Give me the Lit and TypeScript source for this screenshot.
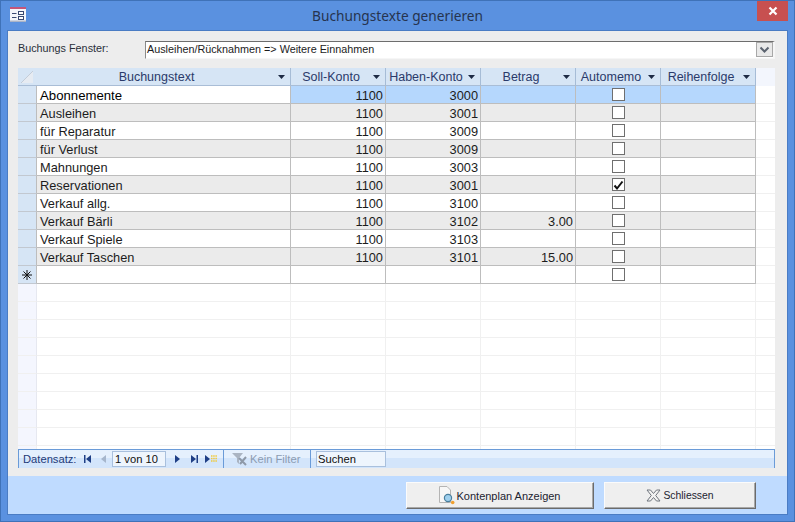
import { LitElement, css, html, nothing } from "lit";
import { customElement } from "lit/decorators.js";

interface Row {
  text: string;
  soll: string;
  haben: string;
  betrag: string;
  memo: boolean;
}

const ROWS: Row[] = [
  { text: "Abonnemente", soll: "1100", haben: "3000", betrag: "", memo: false },
  { text: "Ausleihen", soll: "1100", haben: "3001", betrag: "", memo: false },
  { text: "für Reparatur", soll: "1100", haben: "3009", betrag: "", memo: false },
  { text: "für Verlust", soll: "1100", haben: "3009", betrag: "", memo: false },
  { text: "Mahnungen", soll: "1100", haben: "3003", betrag: "", memo: false },
  { text: "Reservationen", soll: "1100", haben: "3001", betrag: "", memo: true },
  { text: "Verkauf allg.", soll: "1100", haben: "3100", betrag: "", memo: false },
  { text: "Verkauf Bärli", soll: "1100", haben: "3102", betrag: "3.00", memo: false },
  { text: "Verkauf Spiele", soll: "1100", haben: "3103", betrag: "", memo: false },
  { text: "Verkauf Taschen", soll: "1100", haben: "3101", betrag: "15.00", memo: false },
];

const HEADERS = ["Buchungstext", "Soll-Konto", "Haben-Konto", "Betrag", "Automemo", "Reihenfolge"];

@customElement("app-root")
export class AppRoot extends LitElement {
  static styles = css`
    :host {
      display: block;
      font-family: "Liberation Sans", Arial, sans-serif;
      font-size: 12.8px;
      color: #1c1c1c;
    }
    .window {
      width: 795px;
      height: 522px;
      box-sizing: border-box;
      display: flex;
      flex-direction: column;
      padding: 0 7px 7px;
      background: #5a91e0;
      border: 1px solid #3f72b8;
    }
    .titlebar {
      height: 30px;
      flex: none;
      position: relative;
      display: flex;
      align-items: center;
      justify-content: center;
    }
    .title {
      font-family: "Noto Sans", sans-serif;
      font-size: 13.7px;
      color: #26344f;
      margin-top: -1px;
    }
    .appicon {
      position: absolute;
      left: 2px;
      top: 6px;
    }
    .close {
      position: absolute;
      right: -1px;
      top: 0;
      width: 31px;
      height: 20px;
      background: #c75050;
      display: flex;
      align-items: center;
      justify-content: center;
    }
    .client {
      flex: 1;
      display: flex;
      flex-direction: column;
      box-shadow: 0 0 0 1px #4a7cc4;
    }
    .detail {
      height: 445px;
      flex: none;
      box-sizing: border-box;
      padding: 10px 12px 8px 10px;
      background: #ededed;
      display: flex;
      flex-direction: column;
    }
    .pick {
      display: flex;
      align-items: flex-start;
      height: 18px;
      flex: none;
    }
    .pick label {
      width: 127px;
      flex: none;
      color: #2a2f3a;
      font-size: 10.8px;
      line-height: 15px;
    }
    .combo {
      flex: 1;
      height: 18px;
      box-sizing: border-box;
      display: flex;
      align-items: flex-start;
      justify-content: space-between;
      background: #fff;
      border-top: 1px solid #6d6d6d;
      border-left: 1px solid #8a8a8a;
      border-bottom: 1px solid #f6f6f6;
      border-right: 2px solid #f6f6f6;
      padding-left: 1px;
      font-size: 10.8px;
      line-height: 15px;
    }
    .combo-btn {
      width: 17px;
      height: 15px;
      box-sizing: border-box;
      border: 1px solid #a8a8a8;
      background: #e9e9e9;
      display: flex;
      align-items: center;
      justify-content: center;
    }
    .grid {
      margin-top: 9px;
      flex: 1;
      display: flex;
      flex-direction: column;
      background: #fff;
    }
    .row {
      display: grid;
      grid-template-columns: 19px 254px 95px 95px 95px 85px 95px 1fr;
      height: 18px;
      flex: none;
    }
    .row > div {
      box-sizing: border-box;
      border-right: 1px solid #bdbdbd;
      border-bottom: 1px solid #bdbdbd;
      display: flex;
      align-items: center;
      padding: 2px 2px 0;
      min-width: 0;
      white-space: nowrap;
    }
    .row > .sel {
      background: #d6e5f5;
      border-bottom-color: #c2c8d0;
      justify-content: center;
      padding: 0;
    }
    .row > .text {
      padding-left: 3px;
    }
    .row > .num {
      justify-content: flex-end;
    }
    .row > .check {
      justify-content: center;
      padding: 0 0 0 1px;
    }
    .row > .rest {
      background: #fff;
      border-right: none;
      border-bottom: 1px solid #f0f0f0;
    }
    .row.alt > div:not(.sel):not(.rest) {
      background: #ebebeb;
    }
    .row.current > div:not(.sel):not(.rest):not(.text) {
      background: #b5d7fd;
    }
    .row.current > .text {
      color: #000;
      font-size: 13.2px;
    }
    .row.head > div {
      background: #d6e5f5;
      border-right-color: #a6bcd6;
      border-bottom-color: #a9bdd6;
      color: #2a3a6a;
      padding: 0 5px 0 0;
      font-size: 12.5px;
    }
    .row.head > .sel {
      border-right: none;
      padding: 0 2px 0 0;
    }
    .row.head > .rest {
      background: #f3f6fd;
      border-right: none;
      border-bottom: none;
    }
    .row.head .label {
      flex: 1;
      text-align: center;
      padding-right: 2px;
    }
    .row.empty > div {
      background: #fff;
      border-right-color: #f0f0f0;
      border-bottom-color: #f0f0f0;
    }
    .row.empty > .sel {
      background: #f4f6fe;
      border-right-color: #e6e8f0;
    }
    .row.empty > .rest {
      border-right: none;
    }
    .filler {
      flex: 1;
      display: grid;
      grid-template-columns: 19px 254px 95px 95px 95px 85px 95px 1fr;
    }
    .filler > div {
      border-right: 1px solid #f0f0f0;
    }
    .filler > .sel {
      background: #f4f6fe;
    }
    .filler > .rest {
      border-right: none;
    }
    .box {
      width: 13px;
      height: 13px;
      box-sizing: border-box;
      border: 1px solid #6f6f6f;
      background: #fff;
      display: block;
    }
    .nav {
      height: 19px;
      flex: none;
      box-sizing: border-box;
      display: flex;
      align-items: center;
      background: linear-gradient(#e5f0fd 0, #e5f0fd 46%, #d3e5fb 46%, #d3e5fb 100%);
      border: 1px solid #6a9bd8;
      border-bottom: none;
      padding-left: 4px;
      color: #1e3a78;
      font-size: 11.2px;
    }
    .nav .caption {
      width: 61px;
      flex: none;
    }
    .nav svg {
      flex: none;
      display: block;
    }
    .nav .prev {
      margin-left: 10px;
    }
    .nav .last {
      margin-left: 10px;
    }
    .nav .new {
      margin-left: 7px;
    }
    .record {
      width: 54px;
      height: 16px;
      box-sizing: border-box;
      border: 1px solid #a9c0dd;
      background: #eef5fd;
      color: #101010;
      display: flex;
      align-items: center;
      padding-left: 2px;
      flex: none;
      margin: 0 9px 0 5px;
    }
    .sep {
      width: 1px;
      height: 100%;
      background: #6a9bd8;
      flex: none;
    }
    .sep.first {
      margin-left: 5px;
    }
    .nofilter {
      width: 86px;
      box-sizing: border-box;
      padding-left: 8px;
      display: flex;
      align-items: center;
      gap: 2px;
      color: #8c9cb2;
      flex: none;
    }
    .search {
      width: 70px;
      height: 16px;
      box-sizing: border-box;
      margin-left: 5px;
      border: 1px solid #a9c0dd;
      background: #eef5fd;
      color: #101010;
      padding-left: 1px;
      display: flex;
      align-items: center;
      flex: none;
    }
    .footer {
      flex: 1;
      background: #bfdbff;
      display: flex;
      justify-content: flex-end;
      gap: 10px;
      padding: 6px 31px 0 0;
      box-sizing: border-box;
    }
    button {
      height: 27px;
      box-sizing: border-box;
      font: inherit;
      font-size: 11px;
      color: #1c2330;
      background: #efefef;
      border: 1px solid;
      border-color: #fbfbfb #6b6b6b #6b6b6b #fbfbfb;
      box-shadow: inset -1px -1px 0 #a8a8a8;
      display: flex;
      align-items: center;
      justify-content: center;
      padding: 0;
    }
    .b1 {
      width: 188px;
      gap: 1px;
      padding-right: 2px;
    }
    .b2 {
      width: 152px;
      gap: 2px;
      font-size: 10.4px;
    }
  `;

  private gridRow(row: Row, i: number) {
    const cls = ["row", i % 2 ? "alt" : "", i === 0 ? "current" : ""].join(" ");
    return html`<div class=${cls}>
      <div class="sel"></div>
      <div class="text">${row.text}</div>
      <div class="num">${row.soll}</div>
      <div class="num">${row.haben}</div>
      <div class="num">${row.betrag}</div>
      <div class="check">${this.box(row.memo)}</div>
      <div></div>
      <div class="rest"></div>
    </div>`;
  }

  private box(checked: boolean) {
    return html`<span class="box"
      >${checked
        ? html`<svg width="11" height="11" viewBox="0 0 11 11">
            <path d="M1.5 5.5 L4 8.5 L9.5 1.5" fill="none" stroke="#111" stroke-width="2" />
          </svg>`
        : nothing}</span
    >`;
  }

  render() {
    return html`
      <div class="window">
        <div class="titlebar">
          <svg class="appicon" width="16" height="15" viewBox="0 0 16 15">
            <rect x="0" y="0" width="16" height="15" fill="#f4f6fb" />
            <rect x="0" y="0" width="16" height="2" fill="#c4567a" />
            <rect x="0" y="13.5" width="16" height="1.5" fill="#aab4c8" />
            <path d="M2 6.5 H6.5 M2 10.5 H6.5" stroke="#3a4a72" stroke-width="1" />
            <rect x="8.5" y="4.5" width="5" height="3" fill="#fff" stroke="#3a4a72" />
            <rect x="8.5" y="9.5" width="5" height="3" fill="#fff" stroke="#3a4a72" />
          </svg>
          <span class="title">Buchungstexte generieren</span>
          <div class="close">
            <svg width="10" height="10" viewBox="0 0 10 10">
              <path d="M1.5 1.5 L8.5 8.5 M8.5 1.5 L1.5 8.5" stroke="#fff" stroke-width="2.2" />
            </svg>
          </div>
        </div>
        <div class="client">
          <div class="detail">
            <div class="pick">
              <label>Buchungs Fenster:</label>
              <div class="combo">
                <span>Ausleihen/Rücknahmen =&gt; Weitere Einnahmen</span>
                <div class="combo-btn">
                  <svg width="11" height="8" viewBox="0 0 11 8">
                    <path d="M1.5 1.5 L5.5 5.5 L9.5 1.5" fill="none" stroke="#5c6470" stroke-width="2" />
                  </svg>
                </div>
              </div>
            </div>
            <div class="grid">
              <div class="row head">
                <div class="sel">
                  <svg width="12" height="12" viewBox="0 0 12 12">
                    <path d="M12 0 V12 H0 Z" fill="#e6ebf2" />
                    <path d="M12 0 L0 12" stroke="#c3ccd8" />
                  </svg>
                </div>
                ${HEADERS.map(
                  (h) => html`<div>
                    <span class="label">${h}</span>
                    <svg width="7" height="4" viewBox="0 0 7 4"><path d="M0 0 H7 L3.5 4 Z" fill="#1d2a44" /></svg>
                  </div>`
                )}
                <div class="rest"></div>
              </div>
              ${ROWS.map((r, i) => this.gridRow(r, i))}
              <div class="row">
                <div class="sel">
                  <svg width="10" height="10" viewBox="0 0 10 10">
                    <path
                      d="M5 0 V10 M0 5 H10 M1.5 1.5 L8.5 8.5 M8.5 1.5 L1.5 8.5"
                      stroke="#111"
                      stroke-width="1"
                    />
                  </svg>
                </div>
                <div class="text"></div>
                <div></div>
                <div></div>
                <div></div>
                <div class="check">${this.box(false)}</div>
                <div></div>
                <div class="rest"></div>
              </div>
              ${Array.from(
                { length: 9 },
                () => html`<div class="row empty">
                  <div class="sel"></div>
                  <div></div>
                  <div></div>
                  <div></div>
                  <div></div>
                  <div></div>
                  <div></div>
                  <div class="rest"></div>
                </div>`
              )}
              <div class="filler">
                <div class="sel"></div>
                <div></div>
                <div></div>
                <div></div>
                <div></div>
                <div></div>
                <div></div>
                <div class="rest"></div>
              </div>
            </div>
            <div class="nav">
              <span class="caption">Datensatz:</span>
              <svg width="7" height="8" viewBox="0 0 7 8"><path d="M0 0 H1.5 V8 H0 Z M7 0 V8 L2 4 Z" fill="#1f3f86" /></svg>
              <svg class="prev" width="6" height="8" viewBox="0 0 6 8"><path d="M5 0 V8 L0 4 Z" fill="#a6b6cc" /></svg>
              <div class="record">1 von 10</div>
              <svg width="6" height="8" viewBox="0 0 6 8"><path d="M0 0 V8 L5 4 Z" fill="#1f3f86" /></svg>
              <svg class="last" width="7" height="8" viewBox="0 0 7 8"><path d="M0 0 L5 4 L0 8 Z M5.5 0 H7 V8 H5.5 Z" fill="#1f3f86" /></svg>
              <svg class="new" width="13" height="8" viewBox="0 0 13 8">
                <path d="M0 0 L5 4 L0 8 Z" fill="#1f3f86" />
                <path d="M6 1 H12.5 M6 3.5 H12.5 M6 6 H12.5" stroke="#f0c93c" stroke-width="1.5" stroke-dasharray="1.5 .7" />
              </svg>
              <div class="sep first"></div>
              <div class="nofilter">
                <svg width="16" height="14" viewBox="0 0 16 14">
                  <path d="M0 1 H11 L7 6 V12 L5 10 V6 Z" fill="#aab4c2" />
                  <path d="M7 6 L14 13 M14 5 L8 12" stroke="#8e99a8" stroke-width="2" />
                </svg>
                <span>Kein Filter</span>
              </div>
              <div class="sep"></div>
              <div class="search">Suchen</div>
            </div>
          </div>
          <div class="footer">
            <button class="b1">
              <svg width="18" height="19" viewBox="0 0 18 19">
                <path d="M1.5 .5 H9 L12.5 4 V16.5 H1.5 Z" fill="#f7f7f7" stroke="#b4b4b4" />
                <circle cx="10" cy="12" r="3.6" fill="#9fd0ee" stroke="#4a7f9e" stroke-width="1.2" />
                <circle cx="14.7" cy="16.5" r="1.8" fill="#f0a030" />
              </svg>
              <span>Kontenplan Anzeigen</span>
            </button>
            <button class="b2">
              <svg width="15" height="13" viewBox="0 0 15 13">
                <path
                  d="M1 1 H4.5 L7.5 4.5 L10.5 1 H14 L9.7 6.5 L14 12 H10.5 L7.5 8.5 L4.5 12 H1 L5.3 6.5 Z"
                  fill="#f2f2f2"
                  stroke="#70767e"
                />
              </svg>
              <span>Schliessen</span>
            </button>
          </div>
        </div>
      </div>
    `;
  }
}
